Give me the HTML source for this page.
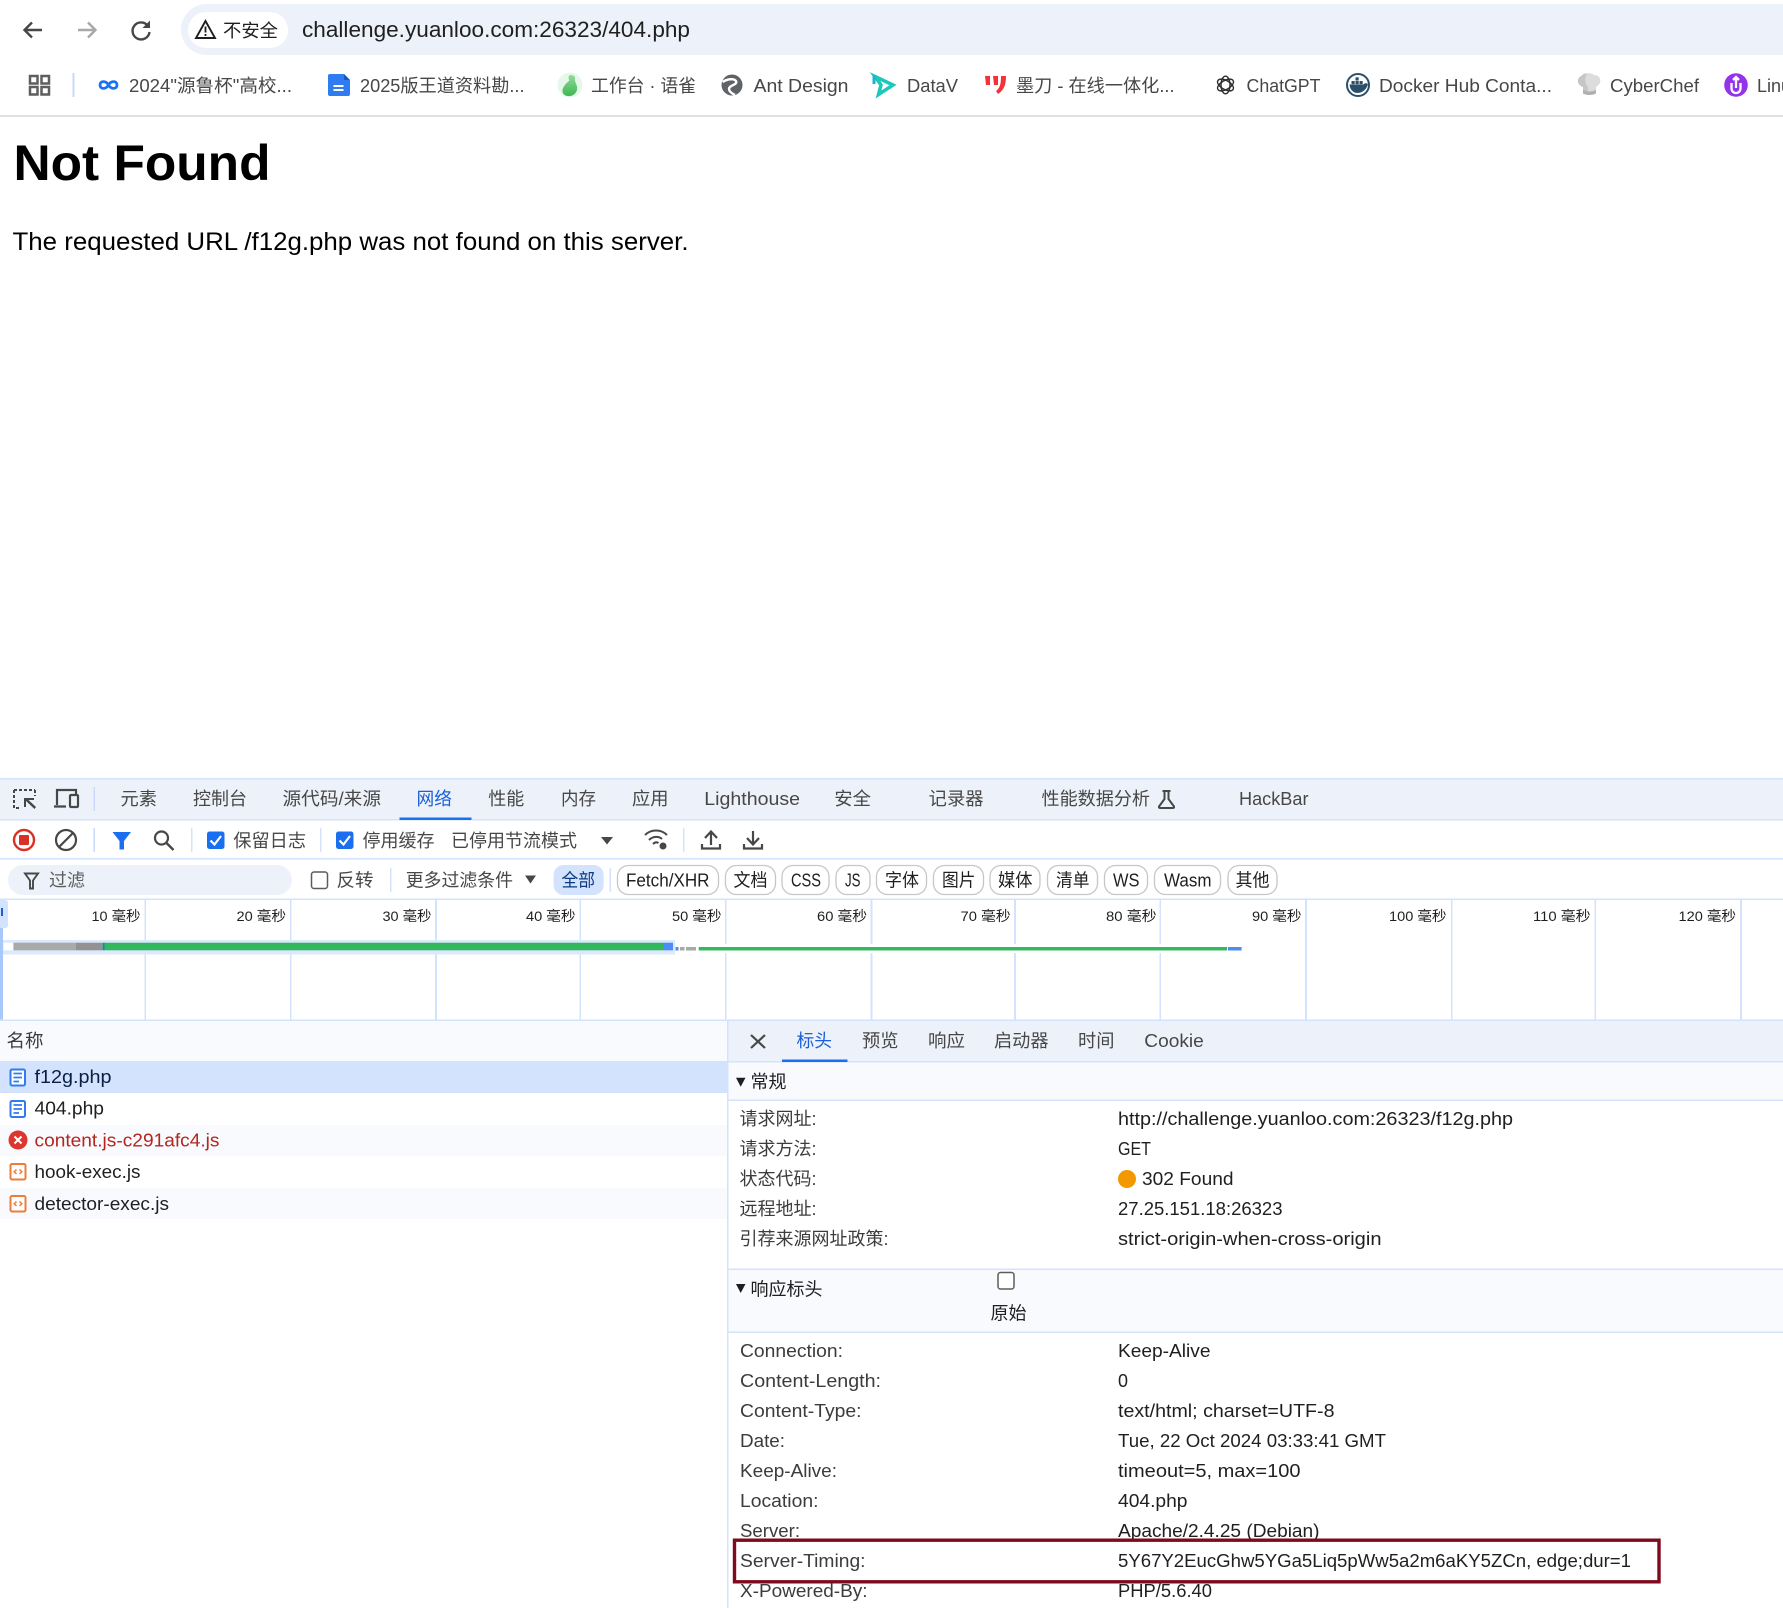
<!DOCTYPE html>
<html lang="zh-CN">
<head>
<meta charset="utf-8">
<title>Not Found</title>
<style>
html,body{margin:0;padding:0;background:#fff;width:1783px;height:1608px;overflow:hidden}
svg{display:block;font-family:"Liberation Sans","Noto Sans CJK SC",sans-serif}
.b{font-size:18px;fill:#474747}
.t{font-size:18px;fill:#474747}
.d{font-size:18px;fill:#1f1f1f}
.l{font-size:18px;fill:#3c3c3c}
.m{font-size:14px;fill:#1f1f1f}
.i{fill:none;stroke:#474747;stroke-width:2.2}
.p{fill:#fff;stroke:#c7c7c7;stroke-width:1.3}
</style>
</head>
<body>
<svg xmlns="http://www.w3.org/2000/svg" width="1783" height="1608" viewBox="0 0 1783 1608">
<defs>
<linearGradient id="yq" x1="0" y1="0" x2="0" y2="1"><stop offset="0" stop-color="#8fdc9a"/><stop offset="1" stop-color="#3fb64f"/></linearGradient>
</defs>
<rect width="1783" height="1608" fill="#fff"/>

<!-- browser chrome -->
<path d="M42 30H25M32 22.500L24.500 30L32 37.500" fill="none" stroke="#474747" stroke-width="2.400"/>
<path d="M78 30H95M88 22.500L95.500 30L88 37.500" fill="none" stroke="#a8a8a8" stroke-width="2.400"/>
<path d="M148 26A8.500 8.500 0 1 0 149.500 32" fill="none" stroke="#474747" stroke-width="2.400"/>
<path d="M150 20.500V28H142.500Z" fill="#474747"/>
<rect x="181" y="4" width="1640" height="51" rx="25.500" fill="#edf1fa"/>
<rect x="188" y="12" width="100" height="36" rx="18" fill="#fff"/>
<path d="M205.500 21L215 38H196Z" fill="none" stroke="#1f1f1f" stroke-width="1.900"/>
<path d="M205.500 26.500V32.500M205.500 34V36" stroke="#1f1f1f" stroke-width="1.800"/>
<text x="223" y="37" font-size="18" fill="#1f1f1f" textLength="55" lengthAdjust="spacingAndGlyphs">不安全</text>
<text x="302" y="37" font-size="22" fill="#1f1f1f" textLength="388" lengthAdjust="spacingAndGlyphs">challenge.yuanloo.com:26323/404.php</text>

<!-- bookmarks -->
<g fill="none" stroke="#5e5e5e" stroke-width="2.500">
<rect x="30" y="76" width="7.500" height="7.500"/><rect x="41.500" y="76" width="7.500" height="7.500"/>
<rect x="30" y="87" width="7.500" height="7.500"/><rect x="41.500" y="87" width="7.500" height="7.500"/>
</g>
<rect x="72.500" y="73" width="2" height="24" fill="#c9daf8"/>
<path d="M108.500 85C106 80.500 100 80.500 100 85C100 89.500 106 89.500 108.500 85C111 80.500 117 80.500 117 85C117 89.500 111 89.500 108.500 85Z" fill="none" stroke="#1a73f0" stroke-width="2.800"/>
<text class="b" x="129" y="92" textLength="163" lengthAdjust="spacingAndGlyphs">2024"源鲁杯"高校...</text>
<path d="M330 74H344L350 80V94Q350 96 348 96H330Q328 96 328 94V76Q328 74 330 74Z" fill="#2f7bf1"/>
<path d="M344 74L350 80H344Z" fill="#1a56c4"/>
<rect x="333.500" y="85" width="10" height="2" fill="#fff"/><rect x="333.500" y="89" width="10" height="2" fill="#fff"/>
<text class="b" x="360" y="92" textLength="164.500" lengthAdjust="spacingAndGlyphs">2025版王道资料勘...</text>
<circle cx="570" cy="85" r="12.500" fill="#e6f8ea"/>
<path d="M571 75C568 75 568 78 569.500 80.500C565 84 560 90 564 94.500C568 97.500 575 96.500 577 90C578 85 574 82 575 78C575 76 573 75 571 75Z" fill="url(#yq)"/>
<text class="b" x="591" y="92" textLength="105" lengthAdjust="spacingAndGlyphs">工作台 · 语雀</text>
<circle cx="732" cy="85" r="10.500" fill="#5f6368"/>
<path d="M722.500 82C727 79 734 78 736 81C738 85 729 85 729 89C729 92 733 94 735 95" fill="none" stroke="#fff" stroke-width="2.400"/>
<text class="b" x="753.500" y="92" textLength="95" lengthAdjust="spacingAndGlyphs">Ant Design</text>
<path d="M875 76.500L893 85L878.500 94.500L881 85Z" fill="#fff" stroke="#1cc8b8" stroke-width="3.500" stroke-linejoin="miter"/>
<path d="M874 75V84" stroke="#19b5d4" stroke-width="3"/>
<text class="b" x="907" y="92" textLength="51" lengthAdjust="spacingAndGlyphs">DataV</text>
<path d="M985 76H990V85H986ZM993 76H998V85H994ZM1001 76H1006C1006 85 1004 90 998 94L996 91C1000 88 1001 84 1001 76Z" fill="#f5323c"/>
<text class="b" x="1016" y="92" textLength="158.500" lengthAdjust="spacingAndGlyphs">墨刀 - 在线一体化...</text>
<g fill="none" stroke="#2f2f2f" stroke-width="1.400">
<ellipse cx="1225.500" cy="85" rx="4.500" ry="8.800"/>
<ellipse cx="1225.500" cy="85" rx="4.500" ry="8.800" transform="rotate(60 1225.500 85)"/>
<ellipse cx="1225.500" cy="85" rx="4.500" ry="8.800" transform="rotate(120 1225.500 85)"/>
</g>
<text class="b" x="1246.500" y="92" textLength="74" lengthAdjust="spacingAndGlyphs">ChatGPT</text>
<circle cx="1358" cy="85" r="11" fill="#fff" stroke="#2c4f69" stroke-width="2"/>
<path d="M1349.500 84.500H1363.500C1364.500 83 1366 83 1368 84C1367 88.500 1363 93 1357.500 93C1353 93 1350 89.500 1349.500 84.500Z" fill="#2c4f69"/>
<rect x="1351.500" y="81" width="3.200" height="3.200" fill="#2c4f69"/><rect x="1355.500" y="81" width="3.200" height="3.200" fill="#2c4f69"/><rect x="1359.500" y="81" width="3.200" height="3.200" fill="#2c4f69"/><rect x="1355.500" y="77.300" width="3.200" height="3.200" fill="#2c4f69"/>
<text class="b" x="1379" y="92" textLength="173" lengthAdjust="spacingAndGlyphs">Docker Hub Conta...</text>
<path d="M1583 87C1577 85 1576 78 1582 75.500C1584 72.500 1591 72.500 1594 75C1601 75 1603 83 1596 87V93.500C1592 95.500 1587 95.500 1583 93.500Z" fill="#dcdcdc"/>
<path d="M1583 87C1577 85 1576 78 1582 75.500C1583 73.500 1585 73.500 1587 73.500C1584 78 1585 84 1588 87V94.800C1586 94.700 1585 94.300 1583 93.500Z" fill="#c6c6c6"/>
<path d="M1583 90C1587 92 1592 92 1596 90V93.500C1592 95.500 1587 95.500 1583 93.500Z" fill="#b0b0b0"/>
<text class="b" x="1610" y="92" textLength="89" lengthAdjust="spacingAndGlyphs">CyberChef</text>
<circle cx="1736" cy="85" r="11.800" fill="#9333ea"/>
<path d="M1731.500 83V88.500A4.500 4.500 0 0 0 1740.500 88.500V83M1733 80L1736 77L1739 80M1736 78V88" fill="none" stroke="#fff" stroke-width="2.300"/>
<text class="b" x="1757" y="92">Linux</text>
<rect y="115" width="1783" height="2" fill="#e1e1e1"/>

<!-- page -->
<text x="13.500" y="180" font-size="50" font-weight="700" fill="#000" textLength="257" lengthAdjust="spacingAndGlyphs">Not Found</text>
<text x="12.500" y="250" font-size="25" fill="#000" textLength="676" lengthAdjust="spacingAndGlyphs">The requested URL /f12g.php was not found on this server.</text>

<!-- devtools tabs -->
<rect y="778" width="1783" height="42" fill="#edf1fa"/>
<rect y="778" width="1783" height="1.500" fill="#d3e3fd"/>
<rect y="819" width="1783" height="1.500" fill="#d3e3fd"/>
<path d="M14 790H35M14 790V808H20M35 790V796" fill="none" stroke="#474747" stroke-width="2" stroke-dasharray="3 2"/>
<path d="M24 798H34V800H28.500L36 807L34.500 809L26 801V807H24Z" fill="#474747"/>
<path d="M57 805V790H76V794M54 806.500H66" fill="none" stroke="#474747" stroke-width="2.200"/>
<rect x="70" y="795" width="8" height="12" rx="1" fill="none" stroke="#474747" stroke-width="2.200"/>
<rect x="93.500" y="787" width="1.500" height="24" fill="#c9daf8"/>
<g class="t">
<text x="120.500" y="805" textLength="36.500" lengthAdjust="spacingAndGlyphs">元素</text>
<text x="193" y="805" textLength="54" lengthAdjust="spacingAndGlyphs">控制台</text>
<text x="282.500" y="805" textLength="98.500" lengthAdjust="spacingAndGlyphs">源代码/来源</text>
<text x="416.500" y="805" textLength="35.500" lengthAdjust="spacingAndGlyphs" style="fill:#1a5fd8">网络</text>
<text x="488.300" y="805" textLength="36" lengthAdjust="spacingAndGlyphs">性能</text>
<text x="561" y="805" textLength="35" lengthAdjust="spacingAndGlyphs">内存</text>
<text x="632" y="805" textLength="36.500" lengthAdjust="spacingAndGlyphs">应用</text>
<text x="704.300" y="805" textLength="95.700" lengthAdjust="spacingAndGlyphs">Lighthouse</text>
<text x="834.300" y="805" textLength="36.700" lengthAdjust="spacingAndGlyphs">安全</text>
<text x="928.700" y="805" textLength="54.800" lengthAdjust="spacingAndGlyphs">记录器</text>
<text x="1041.500" y="805" textLength="108.500" lengthAdjust="spacingAndGlyphs">性能数据分析</text>
<text x="1239" y="805" textLength="69.500" lengthAdjust="spacingAndGlyphs">HackBar</text>
</g>
<path d="M1162.500 791H1170.500M1164.500 791V799L1159 806.500Q1158.500 808 1160.500 808H1172.500Q1174.500 808 1174 806.500L1168.500 799V791" fill="none" stroke="#474747" stroke-width="2"/>
<rect x="399.500" y="817.500" width="72" height="2.500" fill="#1a6ff0"/>

<!-- toolbar -->
<rect y="858" width="1783" height="1.500" fill="#d3e3fd"/>
<circle cx="24" cy="840" r="10" fill="#fff" stroke="#d93025" stroke-width="2.400"/>
<rect x="19" y="835" width="10" height="10" rx="1" fill="#d93025"/>
<circle cx="66" cy="840" r="10" fill="none" stroke="#474747" stroke-width="2.200"/>
<path d="M59 847L73 833" stroke="#474747" stroke-width="2.200"/>
<rect x="93.500" y="828" width="1.500" height="24" fill="#c9daf8"/>
<path d="M112.500 832H131L124 841V849.500H119.500V841Z" fill="#1a6ff0"/>
<circle cx="161.500" cy="838" r="6.500" class="i"/>
<path d="M166.500 843L173.500 850" stroke="#474747" stroke-width="2.400"/>
<rect x="191" y="828" width="1.500" height="24" fill="#d3e3fd"/>
<rect x="207" y="831.500" width="17.500" height="17.500" rx="2.500" fill="#1a6ff0"/>
<path d="M210.500 840.500L214.500 844.500L221 836" fill="none" stroke="#fff" stroke-width="2.200"/>
<text class="t" x="233.300" y="847" textLength="72.700" lengthAdjust="spacingAndGlyphs">保留日志</text>
<rect x="320" y="828" width="1.500" height="24" fill="#d3e3fd"/>
<rect x="336" y="831.500" width="17.500" height="17.500" rx="2.500" fill="#1a6ff0"/>
<path d="M339.500 840.500L343.500 844.500L350 836" fill="none" stroke="#fff" stroke-width="2.200"/>
<text class="t" x="362.500" y="847" textLength="72" lengthAdjust="spacingAndGlyphs">停用缓存</text>
<text class="t" x="451" y="847" textLength="126" lengthAdjust="spacingAndGlyphs">已停用节流模式</text>
<path d="M601 837H613L607 844.500Z" fill="#474747"/>
<path d="M645 835C651 829 661 829 667 835M649 840C653 836 659 836 662 839M653 844C655 842 657 842 658.500 843" fill="none" stroke="#474747" stroke-width="2"/>
<circle cx="663" cy="846" r="3.500" fill="#474747"/>
<rect x="683" y="828" width="1.500" height="24" fill="#d3e3fd"/>
<path d="M711 845V832M705 838L711 831.500L717 838M702 844V848.500H720V844" fill="none" stroke="#474747" stroke-width="2.200"/>
<path d="M753 831V844M747 838L753 844.500L759 838M744 844V848.500H762V844" fill="none" stroke="#474747" stroke-width="2.200"/>

<!-- filter row -->
<rect y="898.500" width="1783" height="1.500" fill="#d3e3fd"/>
<rect x="8" y="865" width="284" height="30" rx="15" fill="#edf1fa"/>
<path d="M25 873.500H38L33 880.500V888.500H30V880.500Z" fill="none" stroke="#474747" stroke-width="1.900"/>
<text x="49" y="886.500" font-size="18" fill="#5c5c5c" textLength="36" lengthAdjust="spacingAndGlyphs">过滤</text>
<rect x="311.500" y="872" width="16" height="16.500" rx="2.500" fill="#fff" stroke="#5c5c5c" stroke-width="1.500"/>
<text class="t" x="336.500" y="886.500" textLength="37" lengthAdjust="spacingAndGlyphs">反转</text>
<rect x="390" y="868" width="1.500" height="24" fill="#d3e3fd"/>
<text class="t" x="405.700" y="886.500" textLength="107.300" lengthAdjust="spacingAndGlyphs">更多过滤条件</text>
<path d="M525 875.500H536L530.500 883.500Z" fill="#474747"/>
<rect x="553.600" y="865" width="50" height="30" rx="10" fill="#d3e3fd"/>
<text x="561.500" y="886.500" font-size="18" fill="#0b3a80" textLength="33.500" lengthAdjust="spacingAndGlyphs">全部</text>
<rect x="609.500" y="868" width="1.500" height="24" fill="#d3e3fd"/>
<g>
<rect class="p" x="617.500" y="865.500" width="101" height="29" rx="11"/>
<rect class="p" x="725.500" y="865.500" width="50" height="29" rx="11"/>
<rect class="p" x="782" y="865.500" width="47" height="29" rx="11"/>
<rect class="p" x="836" y="865.500" width="34" height="29" rx="11"/>
<rect class="p" x="876.500" y="865.500" width="50" height="29" rx="11"/>
<rect class="p" x="933.500" y="865.500" width="50" height="29" rx="11"/>
<rect class="p" x="990" y="865.500" width="50" height="29" rx="11"/>
<rect class="p" x="1047.500" y="865.500" width="50" height="29" rx="11"/>
<rect class="p" x="1104.500" y="865.500" width="43" height="29" rx="11"/>
<rect class="p" x="1154.500" y="865.500" width="66" height="29" rx="11"/>
<rect class="p" x="1228" y="865.500" width="49" height="29" rx="11"/>
</g>
<g class="d">
<text x="626" y="886.500" textLength="83.500" lengthAdjust="spacingAndGlyphs">Fetch/XHR</text>
<text x="733.500" y="886.500" textLength="34" lengthAdjust="spacingAndGlyphs">文档</text>
<text x="791" y="886.500" textLength="30" lengthAdjust="spacingAndGlyphs">CSS</text>
<text x="845" y="886.500" textLength="15.500" lengthAdjust="spacingAndGlyphs">JS</text>
<text x="885" y="886.500" textLength="34" lengthAdjust="spacingAndGlyphs">字体</text>
<text x="942" y="886.500" textLength="33.500" lengthAdjust="spacingAndGlyphs">图片</text>
<text x="998" y="886.500" textLength="34.500" lengthAdjust="spacingAndGlyphs">媒体</text>
<text x="1056" y="886.500" textLength="33.500" lengthAdjust="spacingAndGlyphs">清单</text>
<text x="1113" y="886.500" textLength="26.500" lengthAdjust="spacingAndGlyphs">WS</text>
<text x="1164" y="886.500" textLength="47.500" lengthAdjust="spacingAndGlyphs">Wasm</text>
<text x="1235.500" y="886.500" textLength="34" lengthAdjust="spacingAndGlyphs">其他</text>
</g>

<!-- timeline -->
<g fill="#d3e3fd">
<rect x="144.500" y="900" width="1.500" height="120"/>
<rect x="290" y="900" width="1.500" height="120"/>
<rect x="435" y="900" width="2" height="120"/>
<rect x="579.500" y="900" width="1.500" height="120"/>
<rect x="725" y="900" width="1.500" height="120"/>
<rect x="870.500" y="900" width="2" height="120"/>
<rect x="1014" y="900" width="2" height="120"/>
<rect x="1159.500" y="900" width="1.500" height="120"/>
<rect x="1305" y="900" width="2" height="120"/>
<rect x="1451" y="900" width="1.500" height="120"/>
<rect x="1594.500" y="900" width="1.500" height="120"/>
<rect x="1740" y="900" width="2" height="120"/>
</g>
<g class="m">
<text x="91.500" y="921" textLength="49" lengthAdjust="spacingAndGlyphs">10 毫秒</text>
<text x="236.500" y="921" textLength="49.500" lengthAdjust="spacingAndGlyphs">20 毫秒</text>
<text x="382.500" y="921" textLength="49" lengthAdjust="spacingAndGlyphs">30 毫秒</text>
<text x="526" y="921" textLength="49.500" lengthAdjust="spacingAndGlyphs">40 毫秒</text>
<text x="672" y="921" textLength="49.500" lengthAdjust="spacingAndGlyphs">50 毫秒</text>
<text x="817" y="921" textLength="50" lengthAdjust="spacingAndGlyphs">60 毫秒</text>
<text x="960.500" y="921" textLength="50" lengthAdjust="spacingAndGlyphs">70 毫秒</text>
<text x="1106" y="921" textLength="50.500" lengthAdjust="spacingAndGlyphs">80 毫秒</text>
<text x="1252" y="921" textLength="49.500" lengthAdjust="spacingAndGlyphs">90 毫秒</text>
<text x="1389" y="921" textLength="57.500" lengthAdjust="spacingAndGlyphs">100 毫秒</text>
<text x="1533" y="921" textLength="57.500" lengthAdjust="spacingAndGlyphs">110 毫秒</text>
<text x="1678.500" y="921" textLength="57.500" lengthAdjust="spacingAndGlyphs">120 毫秒</text>
</g>
<rect x="676" y="944" width="570" height="9" fill="#fff"/>
<rect y="940" width="675" height="14.500" fill="#dce8fc"/>
<rect x="3.500" y="942.700" width="10" height="7.600" fill="#fff"/>
<rect x="13.400" y="942.700" width="62.600" height="7.600" fill="#a9a9a9"/>
<rect x="76" y="942.700" width="26.700" height="7.600" fill="#929292"/>
<rect x="102.700" y="942.700" width="2" height="7.600" fill="#0a8ea0"/>
<rect x="104.500" y="942.700" width="559.500" height="7.600" fill="#34b85f"/>
<rect x="664" y="942.700" width="9" height="7.600" fill="#4d8cf5"/>
<rect x="675.500" y="947" width="3" height="3.500" fill="#4d8cf5"/>
<rect x="680" y="947" width="4.500" height="3.500" fill="#a9a9a9"/>
<rect x="686" y="947" width="10" height="3.500" fill="#a9a9a9"/>
<rect x="698.700" y="947" width="528.300" height="3.500" fill="#34b85f"/>
<rect x="1228" y="947" width="13.600" height="3.500" fill="#4d8cf5"/>
<rect x="0" y="900" width="3" height="120" fill="#a8c7fa"/>
<path d="M0 900H5Q8 900 8 903V925Q8 928 5 928H0Z" fill="#d3e3fd"/>
<rect x="1" y="908" width="2" height="8" fill="#1a5fd8"/>
<rect y="1019.500" width="1783" height="1.500" fill="#d3e3fd"/>

<!-- left panel -->
<rect y="1021" width="727" height="40" fill="#f8fafe"/>
<text class="l" x="6.500" y="1047" textLength="37" lengthAdjust="spacingAndGlyphs">名称</text>
<rect y="1061" width="727" height="32" fill="#d3e3fd"/>
<rect y="1125" width="727" height="31" fill="#f8fafe"/>
<rect y="1188" width="727" height="31" fill="#f8fafe"/>
<g fill="#fff" stroke="#2f7bf1" stroke-width="2">
<rect x="10.500" y="1069.500" width="14.500" height="16" rx="1.500"/>
<rect x="10.500" y="1101" width="14.500" height="16" rx="1.500"/>
</g>
<path d="M13.500 1073.500H22M13.500 1077.500H22M13.500 1081.500H19M13.500 1105H22M13.500 1109H22M13.500 1113H19" stroke="#2f7bf1" stroke-width="1.700"/>
<circle cx="18" cy="1140" r="9.500" fill="#dc362e"/>
<path d="M14.500 1136.500L21.500 1143.500M21.500 1136.500L14.500 1143.500" stroke="#fff" stroke-width="2"/>
<g fill="#fff" stroke="#ee7d3b" stroke-width="2">
<rect x="10.500" y="1164" width="15" height="15.500" rx="1.500"/>
<rect x="10.500" y="1196" width="15" height="15.500" rx="1.500"/>
</g>
<path d="M16.500 1169.500L14.200 1171.800L16.500 1174M19.500 1169.500L21.800 1171.800L19.500 1174M16.500 1201.500L14.200 1203.800L16.500 1206M19.500 1201.500L21.800 1203.800L19.500 1206" fill="none" stroke="#ee7d3b" stroke-width="1.500"/>
<text x="34.500" y="1083" font-size="18" fill="#0a1f44" textLength="77" lengthAdjust="spacingAndGlyphs">f12g.php</text>
<text class="d" x="34.500" y="1114.500" textLength="69.500" lengthAdjust="spacingAndGlyphs">404.php</text>
<text x="34.500" y="1146.500" font-size="18" fill="#b3261e" textLength="185" lengthAdjust="spacingAndGlyphs">content.js-c291afc4.js</text>
<text class="d" x="34.500" y="1178" textLength="106" lengthAdjust="spacingAndGlyphs">hook-exec.js</text>
<text class="d" x="34.500" y="1210" textLength="134.500" lengthAdjust="spacingAndGlyphs">detector-exec.js</text>

<!-- right panel -->
<rect x="728" y="1021" width="1055" height="41" fill="#edf1fa"/>
<rect x="728" y="1061" width="1055" height="1.500" fill="#d3e3fd"/>
<rect x="727" y="1021" width="1.500" height="587" fill="#d3e3fd"/>
<path d="M751 1035L765 1048M765 1035L751 1048" stroke="#474747" stroke-width="2.200"/>
<rect x="782" y="1059.500" width="65.500" height="2.500" fill="#1a6ff0"/>
<g class="t">
<text x="796.500" y="1047" textLength="35.500" lengthAdjust="spacingAndGlyphs" style="fill:#1a5fd8">标头</text>
<text x="862" y="1047" textLength="36.500" lengthAdjust="spacingAndGlyphs">预览</text>
<text x="928" y="1047" textLength="37" lengthAdjust="spacingAndGlyphs">响应</text>
<text x="994" y="1047" textLength="54.500" lengthAdjust="spacingAndGlyphs">启动器</text>
<text x="1078" y="1047" textLength="36.500" lengthAdjust="spacingAndGlyphs">时间</text>
<text x="1144.300" y="1047" textLength="59.500" lengthAdjust="spacingAndGlyphs">Cookie</text>
</g>
<rect x="728.500" y="1062.500" width="1055" height="37.500" fill="#f8fafe"/>
<rect x="728.500" y="1099.500" width="1055" height="1.500" fill="#d3e3fd"/>
<path d="M736 1077.700H745.500L740.700 1086.700Z" fill="#1f1f1f"/>
<text class="d" x="750.500" y="1088" textLength="36" lengthAdjust="spacingAndGlyphs">常规</text>
<g class="l">
<text x="739.500" y="1125" textLength="77" lengthAdjust="spacingAndGlyphs">请求网址:</text>
<text x="739.500" y="1155" textLength="77" lengthAdjust="spacingAndGlyphs">请求方法:</text>
<text x="739.500" y="1185" textLength="77" lengthAdjust="spacingAndGlyphs">状态代码:</text>
<text x="739.500" y="1215" textLength="77" lengthAdjust="spacingAndGlyphs">远程地址:</text>
<text x="739.500" y="1245" textLength="149" lengthAdjust="spacingAndGlyphs">引荐来源网址政策:</text>
</g>
<g class="d">
<text x="1118" y="1125" textLength="395" lengthAdjust="spacingAndGlyphs">http://challenge.yuanloo.com:26323/f12g.php</text>
<text x="1118" y="1155" textLength="33" lengthAdjust="spacingAndGlyphs">GET</text>
<text x="1142" y="1185" textLength="91.500" lengthAdjust="spacingAndGlyphs">302 Found</text>
<text x="1118" y="1215" textLength="164.500" lengthAdjust="spacingAndGlyphs">27.25.151.18:26323</text>
<text x="1118" y="1245" textLength="263.500" lengthAdjust="spacingAndGlyphs">strict-origin-when-cross-origin</text>
</g>
<circle cx="1127" cy="1179" r="9" fill="#f29900"/>
<rect x="728.500" y="1269" width="1055" height="63" fill="#f8fafe"/>
<rect x="728.500" y="1268.500" width="1055" height="1.500" fill="#d3e3fd"/>
<rect x="728.500" y="1331.500" width="1055" height="1.500" fill="#d3e3fd"/>
<path d="M736 1284H745.500L740.700 1293Z" fill="#1f1f1f"/>
<text class="d" x="750.500" y="1295.500" textLength="72" lengthAdjust="spacingAndGlyphs">响应标头</text>
<rect x="998" y="1272.500" width="16" height="16.500" rx="2.500" fill="#fff" stroke="#5c5c5c" stroke-width="1.500"/>
<text class="d" x="990.500" y="1319.500" textLength="36" lengthAdjust="spacingAndGlyphs">原始</text>
<g class="l">
<text x="740" y="1357" textLength="103" lengthAdjust="spacingAndGlyphs">Connection:</text>
<text x="740" y="1387" textLength="141" lengthAdjust="spacingAndGlyphs">Content-Length:</text>
<text x="740" y="1417" textLength="121.500" lengthAdjust="spacingAndGlyphs">Content-Type:</text>
<text x="740" y="1447" textLength="45" lengthAdjust="spacingAndGlyphs">Date:</text>
<text x="740" y="1477" textLength="97" lengthAdjust="spacingAndGlyphs">Keep-Alive:</text>
<text x="740" y="1507" textLength="78.500" lengthAdjust="spacingAndGlyphs">Location:</text>
<text x="740" y="1537" textLength="60" lengthAdjust="spacingAndGlyphs">Server:</text>
<text x="740" y="1567" textLength="125.500" lengthAdjust="spacingAndGlyphs">Server-Timing:</text>
<text x="740" y="1597" textLength="127.500" lengthAdjust="spacingAndGlyphs">X-Powered-By:</text>
</g>
<g class="d">
<text x="1118" y="1357" textLength="92.500" lengthAdjust="spacingAndGlyphs">Keep-Alive</text>
<text x="1118" y="1387" textLength="10" lengthAdjust="spacingAndGlyphs">0</text>
<text x="1118" y="1417" textLength="216.500" lengthAdjust="spacingAndGlyphs">text/html; charset=UTF-8</text>
<text x="1118" y="1447" textLength="268" lengthAdjust="spacingAndGlyphs">Tue, 22 Oct 2024 03:33:41 GMT</text>
<text x="1118" y="1477" textLength="182.500" lengthAdjust="spacingAndGlyphs">timeout=5, max=100</text>
<text x="1118" y="1507" textLength="69.500" lengthAdjust="spacingAndGlyphs">404.php</text>
<text x="1118" y="1537" textLength="201.500" lengthAdjust="spacingAndGlyphs">Apache/2.4.25 (Debian)</text>
<text x="1118" y="1567" textLength="513" lengthAdjust="spacingAndGlyphs">5Y67Y2EucGhw5YGa5Liq5pWw5a2m6aKY5ZCn, edge;dur=1</text>
<text x="1118" y="1597" textLength="94" lengthAdjust="spacingAndGlyphs">PHP/5.6.40</text>
</g>
<rect x="734.500" y="1540.200" width="924.500" height="41.600" fill="none" stroke="#7f0a1f" stroke-width="3.400"/>
</svg>
</body>
</html>
